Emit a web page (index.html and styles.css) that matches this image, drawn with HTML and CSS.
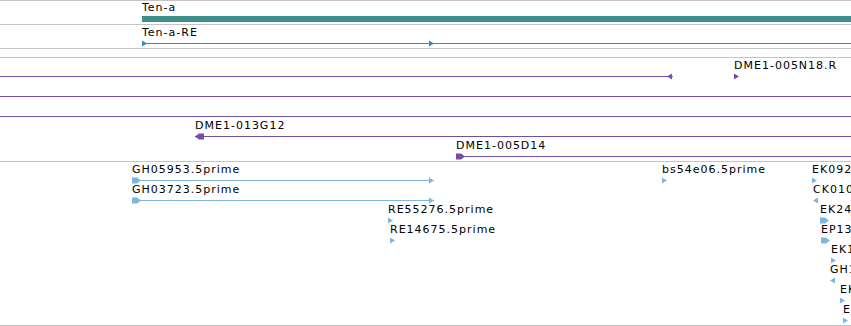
FILE: index.html
```html
<!DOCTYPE html>
<html lang="en">
<head>
  <meta charset="UTF-8" />
  <title>Ten-a region</title>
  <meta name="viewport" content="width=device-width, initial-scale=1" />
  <link rel="stylesheet" href="styles.css">
</head>
<body>
  <div class="panel">
    <div class="track track-gene" id="gene"></div>
    <div class="track track-transcript" id="transcript"></div>
    <div class="track track-empty"></div>
    <div class="track track-bac" id="bac"></div>
    <div class="track track-est" id="est"></div>
  </div>

  <script>
    // x / w are screen pixels for the current zoom, row is the stacking level
    const tracks = {
      gene: [
        { label: "Ten-a", x: 142, w: 709, row: 0, bar: true }
      ],
      transcript: [
        { label: "Ten-a-RE", x: 142, w: 709, row: 0, marks: [[0, "r"], [287, "r"]] }
      ],
      bac: [
        { x: 0, w: 673, row: 0, marks: [[667, "l"]] },
        { label: "DME1-005N18.R", x: 734, w: 6, row: 0, marks: [[0, "r"]] },
        { x: 0, w: 851, row: 1 },
        { x: 0, w: 851, row: 2 },
        { label: "DME1-013G12", x: 195, w: 656, row: 3, marks: [[0, "L"]] },
        { label: "DME1-005D14", x: 456, w: 395, row: 4, marks: [[0, "R"]] }
      ],
      est: [
        { label: "GH05953.5prime", x: 132, w: 302, row: 0, marks: [[0, "R"], [297, "r"]] },
        { label: "GH03723.5prime", x: 132, w: 302, row: 1, marks: [[0, "R"], [297, "r"]] },
        { label: "RE55276.5prime", x: 388, w: 6, row: 2, marks: [[0, "r"]] },
        { label: "RE14675.5prime", x: 390, w: 6, row: 3, marks: [[0, "r"]] },
        { label: "bs54e06.5prime", x: 662, w: 6, row: 0, marks: [[0, "r"]] },
        { label: "EK092518.5prime", x: 812, w: 7, row: 0, marks: [[0, "r"]] },
        { label: "CK01075.5prime", x: 813, w: 6, row: 1, marks: [[0, "l"]] },
        { label: "EK247381.5prime", x: 820, w: 10, row: 2, marks: [[0, "R"]] },
        { label: "EP13462.5prime", x: 821, w: 10, row: 3, marks: [[0, "R"]] },
        { label: "EK1", x: 831, w: 6, row: 4, marks: [[0, "r"]] },
        { label: "GH1", x: 830, w: 6, row: 5, marks: [[0, "l"]] },
        { label: "EK", x: 840, w: 6, row: 6, marks: [[0, "r"]] },
        { label: "EP", x: 843, w: 6, row: 7, marks: [[0, "r"]] }
      ]
    };

    function markShape(x, kind) {
      if (kind === "r") return `<polygon points="${x},0.5 ${x + 5},3.5 ${x},6.5"/>`;
      if (kind === "l") return `<polygon points="${x + 5},0.5 ${x},3.5 ${x + 5},6.5"/>`;
      if (kind === "R") return `<polygon points="${x},0.5 ${x + 5},0.5 ${x + 9},3.5 ${x + 5},6.5 ${x},6.5"/>`;
      return `<polygon points="${x},3.5 ${x + 4},0.5 ${x + 9},0.5 ${x + 9},6.5 ${x + 4},6.5"/>`;
    }

    function drawFeature(container, f) {
      const el = document.createElement("div");
      el.className = "feature";
      el.style.left = f.x + "px";
      el.style.top = (f.bar ? 1 : 2 + f.row * 20) + "px";

      let shapes = "";
      if (f.bar) {
        shapes = `<rect x="0" y="1" width="${f.w}" height="6"/>`;
      } else {
        if (f.w > 12) shapes += `<rect x="0" y="3" width="${f.w}" height="1"/>`;
        (f.marks || []).forEach(m => shapes += markShape(m[0], m[1]));
      }

      el.innerHTML = `
        <div class="feature-label">${f.label || ""}</div>
        <svg width="${f.w}" height="7" viewBox="0 0 ${f.w} 7">${shapes}</svg>
      `;
      container.appendChild(el);
    }

    Object.keys(tracks).forEach(id => {
      const container = document.getElementById(id);
      tracks[id].forEach(f => drawFeature(container, f));
    });
  </script>
</body>
</html>
```

FILE: styles.css
```css
body {
  margin: 0;
  background: #fff;
  font-family: "DejaVu Sans", Verdana, sans-serif;
}
.panel {
  width: 851px;
  border-top: 1px solid #c4c4c4;
}
.track {
  position: relative;
  overflow: hidden;
  border-bottom: 1px solid #c4c4c4;
}
.track-gene {
  height: 23px;
}
.track-transcript {
  height: 23px;
}
.track-empty {
  height: 8px;
}
.track-bac {
  height: 103px;
}
.track-est {
  height: 163px;
}
.feature {
  position: absolute;
  display: flex;
  flex-direction: column;
}
.feature-label {
  height: 13px;
  font-size: 11px;
  line-height: 12px;
  letter-spacing: 1px;
  color: #000;
  white-space: nowrap;
}
.feature svg {
  display: block;
}
.track-gene svg {
  fill: #3f8e8e;
}
.track-transcript svg {
  fill: #1d98b4;
}
.track-bac svg {
  fill: #6e50aa;
}
.track-est svg {
  fill: #7db6df;
}
```
